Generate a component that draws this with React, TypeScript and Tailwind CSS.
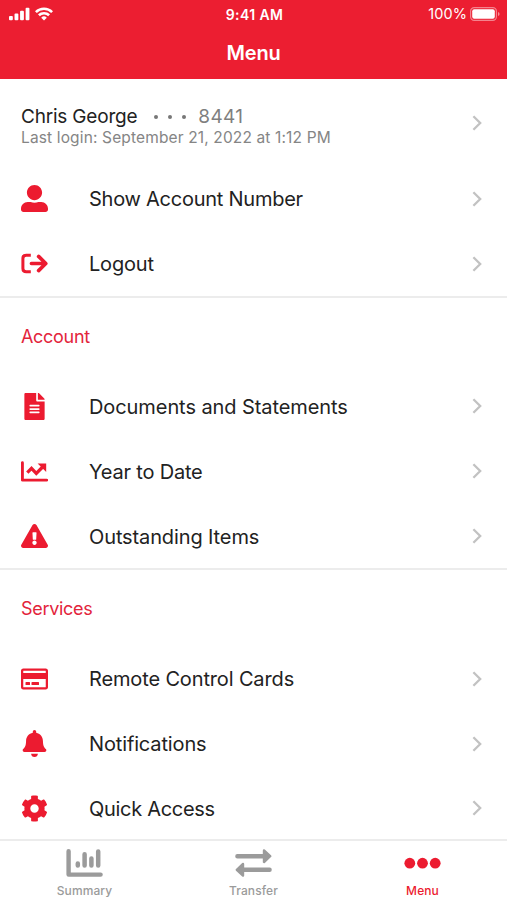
import * as React from "react";
import {
  FaBell,
  FaCog,
  FaExclamationTriangle,
  FaFileAlt,
  FaRegCreditCard,
  FaUserAlt,
} from "react-icons/fa";

interface MenuItem {
  label: string;
  icon: React.ReactNode;
  tracking?: string;
}

interface MenuSection {
  title: string;
  items: MenuItem[];
}

function LogoutIcon() {
  return (
    <svg viewBox="0 0 27 27" className="w-[27px] h-[27px]" fill="none" stroke="currentColor" strokeWidth="3.6" strokeLinecap="round" strokeLinejoin="round">
      <path d="M9.8 5.2H5.2Q1.9 5.2 1.9 8.4v10.2q0 3.2 3.3 3.2h4.6" strokeWidth="3" strokeLinecap="butt" />
      <path d="M10.4 13.5H24M17.6 6.4l7.2 7.1-7.2 7.1" />
    </svg>
  );
}

function ChartLineIcon() {
  return (
    <svg viewBox="0 0 27 27" className="w-[27px] h-[27px]" fill="none" stroke="currentColor">
      <path d="M1.4 4.8v17.3h24.4" strokeWidth="2.9" strokeLinecap="round" strokeLinejoin="round" />
      <path d="M6.3 14.6l4.2-4.2 4.8 4.9 6.8-6.8" strokeWidth="3.3" />
      <path d="M16.6 5.5h8.6v8.6z" fill="currentColor" stroke="none" />
    </svg>
  );
}

function SummaryIcon() {
  return (
    <svg viewBox="0 0 37 28" className="w-[37px] h-[28px]" fill="none" stroke="currentColor" strokeLinecap="round" strokeLinejoin="round">
      <path d="M2.6 2.3v23.3h32" strokeWidth="4.4" />
      <path d="M11.8 14.4v2.2M18.6 5.2v11.4M25.4 9.6v7M32.2 2.6v14" strokeWidth="4.5" />
    </svg>
  );
}

function TransferIcon() {
  return (
    <svg viewBox="0 0 37 28" className="w-[37px] h-[28px]" fill="currentColor" stroke="currentColor" strokeLinejoin="round" strokeLinecap="round">
      <path d="M2.4 7.2h27M34.6 20.8H8" strokeWidth="4.4" />
      <path d="M29 1.4l6.2 5.8-6.2 5.8zM8 15l-6.2 5.8 6.2 5.8z" strokeWidth="2.4" />
    </svg>
  );
}

function DotsIcon() {
  return (
    <svg viewBox="0 0 37 28" className="w-[37px] h-[28px]" fill="currentColor">
      <circle cx="5.8" cy="14.2" r="5.4" />
      <circle cx="18.5" cy="14.2" r="5.4" />
      <circle cx="31.2" cy="14.2" r="5.4" />
    </svg>
  );
}

function Chevron() {
  return (
    <svg viewBox="0 0 10 16" className="w-[10px] h-[16px] shrink-0 text-[#c2c2c2]" fill="none" stroke="currentColor" strokeWidth="2.3">
      <path d="M1.4 1.2L8.2 8l-6.8 6.8" />
    </svg>
  );
}

const profileItems: MenuItem[] = [
  { label: "Show Account Number", icon: <FaUserAlt size={27} />, tracking: "tracking-[-0.25px]" },
  { label: "Logout", icon: <LogoutIcon /> },
];

const sections: MenuSection[] = [
  {
    title: "Account",
    items: [
      { label: "Documents and Statements", icon: <FaFileAlt size={27} />, tracking: "tracking-[-0.08px]" },
      { label: "Year to Date", icon: <ChartLineIcon /> },
      { label: "Outstanding Items", icon: <FaExclamationTriangle className="w-[27px] h-[24px]" />, tracking: "tracking-[-0.12px]" },
    ],
  },
  {
    title: "Services",
    items: [
      { label: "Remote Control Cards", icon: <FaRegCreditCard className="w-[27px] h-[24px]" />, tracking: "tracking-[-0.14px]" },
      { label: "Notifications", icon: <FaBell size={27} />, tracking: "tracking-[-0.14px]" },
      { label: "Quick Access", icon: <FaCog size={27} />, tracking: "tracking-[-0.3px]" },
    ],
  },
];

function MenuRow({ item }: { item: MenuItem }) {
  return (
    <div className="h-[64.8px] flex items-center pl-[20.5px] pr-[25px]">
      <div className="w-[27px] flex justify-center text-[#ec1b30]">{item.icon}</div>
      <div className={`flex-1 ml-[41.5px] pt-px text-[20px] text-[#222222] ${item.tracking ?? "tracking-[-0.2px]"}`}>
        {item.label}
      </div>
      <Chevron />
    </div>
  );
}

function StatusBar() {
  return (
    <div className="h-[27px] flex items-center pl-[9px] pr-[7px]">
      <div className="flex-1 flex items-center gap-[5px]">
        <svg viewBox="0 0 22 14" className="w-[21px] h-[14px]" fill="currentColor">
          <rect x="0" y="9" width="4" height="4.5" rx="1" />
          <rect x="5.8" y="6.4" width="4" height="7.1" rx="1" />
          <rect x="11.6" y="3.6" width="4" height="9.9" rx="1" />
          <rect x="17.4" y="0.4" width="4" height="13.1" rx="1" />
        </svg>
        <svg viewBox="0 0 18 14" className="w-[18px] h-[14px]" fill="none" stroke="currentColor" strokeWidth="2.6">
          <path d="M0.9 5.1a11.6 11.6 0 0 1 16.2 0" />
          <path d="M3.9 8.3a7.3 7.3 0 0 1 10.2 0" />
          <path d="M9 13.6l-2.8-2.9a4 4 0 0 1 5.6 0z" fill="currentColor" stroke="none" />
        </svg>
      </div>
      <div className="pt-px text-center text-[14px] font-semibold tracking-[0.4px] whitespace-nowrap">9:41 AM</div>
      <div className="flex-1 flex items-center justify-end gap-[3px]">
        <span className="text-[14.5px] tracking-[0.1px]">100%</span>
        <svg viewBox="0 0 30 14" className="w-[30px] h-[14px]">
          <rect x="0.6" y="0.6" width="25.8" height="12.8" rx="3.6" fill="none" stroke="#ffffff" strokeOpacity="0.45" strokeWidth="1.2" />
          <rect x="2.2" y="2.2" width="22.6" height="9.6" rx="2" fill="#ffffff" />
          <path d="M28 5v4q1.6-.6 1.6-2T28 5z" fill="#ffffff" fillOpacity="0.5" />
        </svg>
      </div>
    </div>
  );
}

export default function App() {
  return (
    <div className="w-[507px] h-[900px] flex flex-col overflow-hidden bg-white font-['Inter',sans-serif]">
      <header className="h-[79px] shrink-0 bg-[#ec1e31] text-white">
        <StatusBar />
        <h1 className="h-[51px] flex items-center justify-center text-[20px] font-semibold tracking-[-0.2px]">
          Menu
        </h1>
      </header>

      <main className="h-[760px] shrink-0 overflow-hidden">
        <div className="h-[87.5px] flex items-center pl-[21px] pr-[25px]">
          <div className="flex-1 pt-[7px]">
            <div className="flex items-center h-[22px] text-[19px]">
              <span className="tracking-[-0.2px] text-[#222222]">Chris George</span>
              <span className="ml-[17px] pt-px flex gap-[10px]">
                <span className="w-1 h-1 rounded-full bg-[#777777]" />
                <span className="w-1 h-1 rounded-full bg-[#777777]" />
                <span className="w-1 h-1 rounded-full bg-[#777777]" />
              </span>
              <span className="ml-[12px] tracking-[0.35px] text-[#7f7f7f]">8441</span>
            </div>
            <div className="h-[19px] leading-[19px] text-[15.5px] tracking-[0.14px] text-[#858585]">
              Last login: September 21, 2022 at 1:12 PM
            </div>
          </div>
          <Chevron />
        </div>
        {profileItems.map((item) => (
          <MenuRow key={item.label} item={item} />
        ))}

        {sections.map((section) => (
          <section key={section.title} className="border-t-2 border-[#ececec]">
            <h2 className="h-[76px] flex items-center pl-[21px] text-[18px] tracking-[-0.3px] text-[#e3243b]">
              {section.title}
            </h2>
            {section.items.map((item) => (
              <MenuRow key={item.label} item={item} />
            ))}
          </section>
        ))}
      </main>

      <nav className="flex-1 grid grid-cols-3 border-t-2 border-[#ececec] text-[12px] font-medium tracking-[0.1px] text-[#9b9b9b]">
        <div className="flex flex-col items-center pt-[8px]">
          <SummaryIcon />
          <span className="mt-[5px]">Summary</span>
        </div>
        <div className="flex flex-col items-center pt-[8px]">
          <TransferIcon />
          <span className="mt-[5px]">Transfer</span>
        </div>
        <div className="flex flex-col items-center pt-[8px] text-[#ec1b30]">
          <DotsIcon />
          <span className="mt-[5px]">Menu</span>
        </div>
      </nav>
    </div>
  );
}
